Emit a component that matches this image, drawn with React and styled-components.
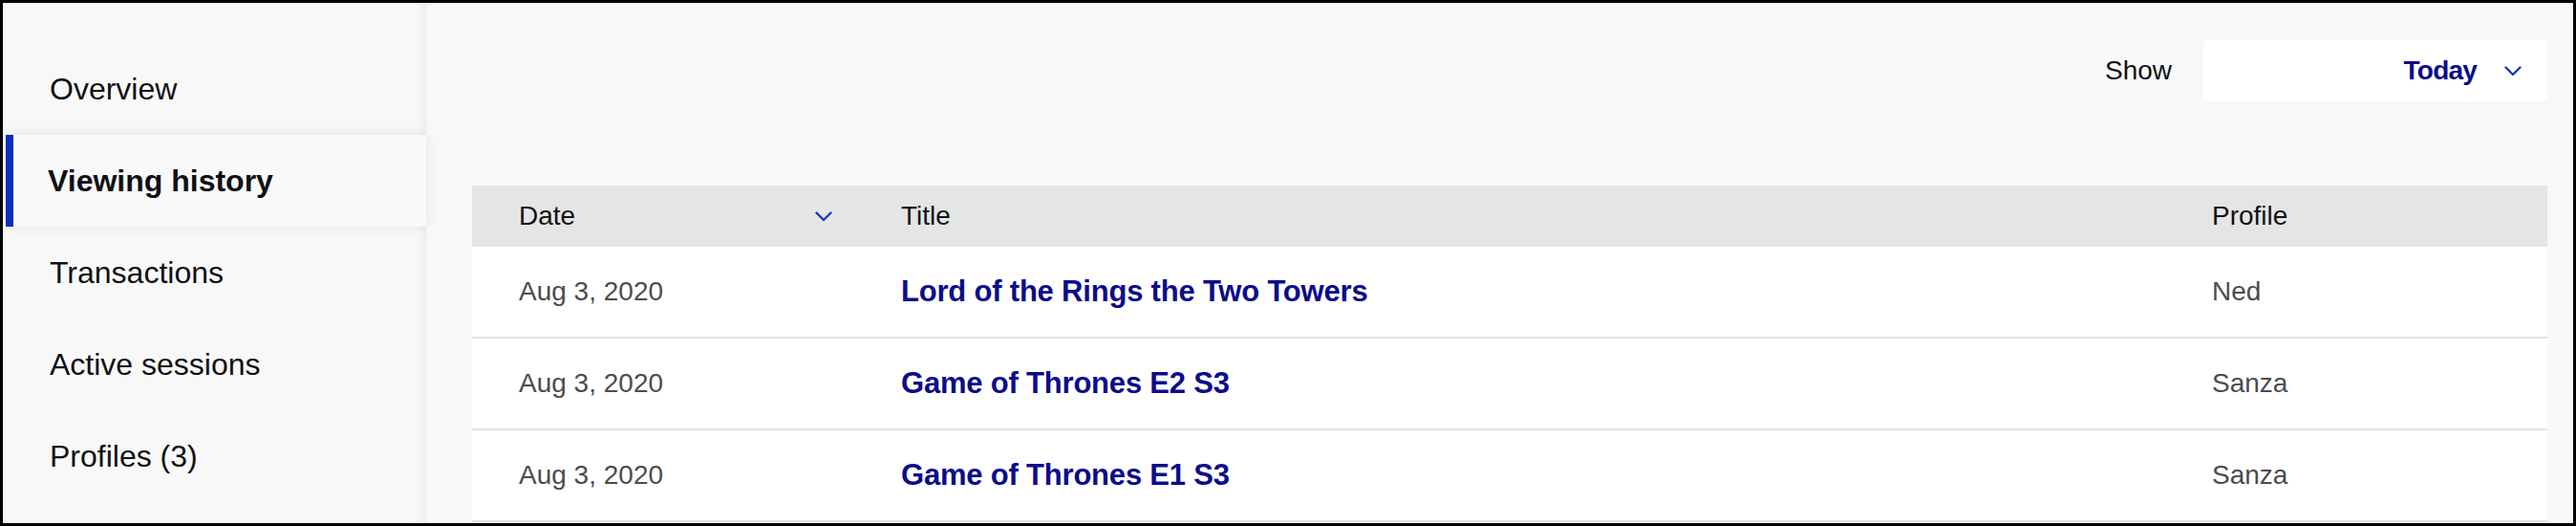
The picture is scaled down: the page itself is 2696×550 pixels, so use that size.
import React from "react";
import styled, { createGlobalStyle } from "styled-components";

const GlobalStyle = createGlobalStyle`
  html, body { margin: 0; padding: 0; }
  body {
    font-family: "Liberation Sans", Arial, sans-serif;
    background: #000;
  }
  * { box-sizing: border-box; }
`;

const Frame = styled.div`
  width: 2696px;
  height: 550px;
  border: 3px solid #000;
  display: flex;
  background: #f8f8f8;
  overflow: hidden;
`;

const Sidebar = styled.nav`
  width: 443px;
  flex: none;
  padding-top: 42px;
  background: #f8f8f8;
  box-shadow: inset -12px 0 12px -10px rgba(0, 0, 0, 0.07);
  display: flex;
  flex-direction: column;
`;

const NavItem = styled.div`
  height: 96px;
  display: flex;
  align-items: center;
  padding-left: ${(p) => (p.$active ? "44px" : "49px")};
  margin-left: ${(p) => (p.$active ? "3px" : "0")};
  font-size: 32px;
  color: #101014;
  font-weight: ${(p) => (p.$active ? 700 : 400)};
  background: ${(p) => (p.$active ? "#f9f9f9" : "transparent")};
  box-shadow: ${(p) =>
    p.$active ? "inset 8px 0 0 #0a2fbf, 0 0 12px rgba(0,0,0,0.09)" : "none"};
  position: ${(p) => (p.$active ? "relative" : "static")};
  z-index: ${(p) => (p.$active ? 1 : "auto")};
`;

const Main = styled.main`
  flex: 1;
  padding: 39px 27px 0 48px;
  display: flex;
  flex-direction: column;
`;

const Toolbar = styled.div`
  display: flex;
  justify-content: flex-end;
  align-items: center;
  height: 64px;
`;

const ShowLabel = styled.span`
  font-size: 28px;
  color: #111;
  margin-right: 33px;
`;

const Select = styled.div`
  width: 360px;
  height: 64px;
  background: #fff;
  border-radius: 4px;
  display: flex;
  align-items: center;
  justify-content: flex-end;
  padding-right: 27px;
  gap: 29px;
`;

const SelectValue = styled.span`
  font-size: 28px;
  font-weight: 700;
  letter-spacing: -0.8px;
  color: #0c0c8a;
`;

const Table = styled.div`
  margin-top: 88px;
  display: flex;
  flex-direction: column;
`;

const HeaderRow = styled.div`
  display: grid;
  grid-template-columns: 400px 1fr 400px;
  height: 64px;
  background: #e4e6e5;
  align-items: center;
`;

const HeaderCell = styled.div`
  padding-left: 49px;
  padding-right: ${(p) => (p.$sortable ? "23px" : "0")};
  font-size: 28px;
  color: #121214;
  display: flex;
  justify-content: space-between;
  align-items: center;
`;

const Row = styled.div`
  display: grid;
  grid-template-columns: 400px 1fr 400px;
  height: 96px;
  background: #fff;
  border-bottom: 2px solid #e3e3e3;
  align-items: center;
`;

const MetaCell = styled.div`
  padding-left: 49px;
  font-size: 28px;
  color: #4b4b51;
`;

const TitleCell = styled.div`
  padding-left: 49px;
  font-size: 31px;
  font-weight: 700;
  letter-spacing: -0.2px;
  color: #0c0c8a;
`;

const Chevron = ({ color }) => (
  <svg width="18" height="11" viewBox="0 0 18 11" fill="none">
    <path
      d="M1.5 1.5 L9 9 L16.5 1.5"
      stroke={color}
      strokeWidth="2.4"
      strokeLinecap="round"
      strokeLinejoin="round"
    />
  </svg>
);

const navItems = [
  "Overview",
  "Viewing history",
  "Transactions",
  "Active sessions",
  "Profiles (3)",
];

const rows = [
  { date: "Aug 3, 2020", title: "Lord of the Rings the Two Towers", profile: "Ned" },
  { date: "Aug 3, 2020", title: "Game of Thrones E2 S3", profile: "Sanza" },
  { date: "Aug 3, 2020", title: "Game of Thrones E1 S3", profile: "Sanza" },
];

export default function App() {
  return (
    <>
      <GlobalStyle />
      <Frame>
        <Sidebar>
          {navItems.map((item) => (
            <NavItem key={item} $active={item === "Viewing history"}>
              {item}
            </NavItem>
          ))}
        </Sidebar>
        <Main>
          <Toolbar>
            <ShowLabel>Show</ShowLabel>
            <Select>
              <SelectValue>Today</SelectValue>
              <Chevron color="#1a35c8" />
            </Select>
          </Toolbar>
          <Table>
            <HeaderRow>
              <HeaderCell $sortable>
                Date
                <Chevron color="#1a35c8" />
              </HeaderCell>
              <HeaderCell>Title</HeaderCell>
              <HeaderCell>Profile</HeaderCell>
            </HeaderRow>
            {rows.map((r, i) => (
              <Row key={i}>
                <MetaCell>{r.date}</MetaCell>
                <TitleCell>{r.title}</TitleCell>
                <MetaCell>{r.profile}</MetaCell>
              </Row>
            ))}
          </Table>
        </Main>
      </Frame>
    </>
  );
}
